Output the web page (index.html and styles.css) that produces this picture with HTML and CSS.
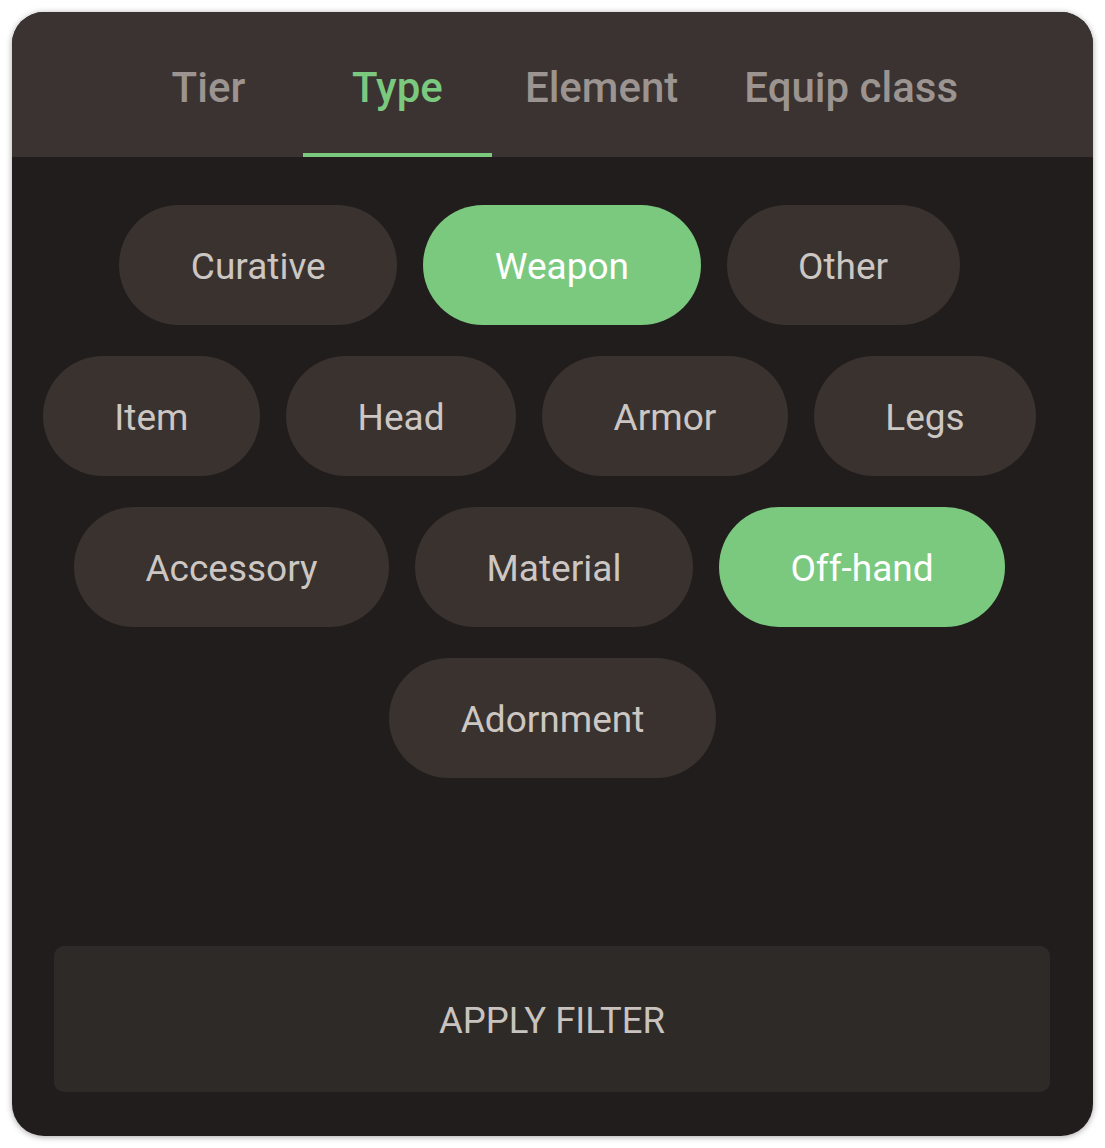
FILE: index.html
```html
<!DOCTYPE html>
<html>
<head>
<meta charset="utf-8">
<link rel="stylesheet" href="styles.css">
</head>
<body>
<div class="card">
  <nav class="tabs">
    <div class="tab">Tier</div>
    <div class="tab active">Type</div>
    <div class="tab">Element</div>
    <div class="tab">Equip class</div>
  </nav>
  <div class="chips">
    <div class="chip">Curative</div>
    <div class="chip on">Weapon</div>
    <div class="chip">Other</div>
    <div class="chip">Item</div>
    <div class="chip">Head</div>
    <div class="chip">Armor</div>
    <div class="chip">Legs</div>
    <div class="chip">Accessory</div>
    <div class="chip">Material</div>
    <div class="chip on">Off-hand</div>
    <div class="chip">Adornment</div>
  </div>
  <button class="apply">APPLY FILTER</button>
</div>
</body>
</html>
```
FILE: styles.css
```css
html, body {
  margin: 0;
  background: #ffffff;
}
body {
  padding: 12px;
  font-family: Roboto, "Liberation Sans", sans-serif;
}
.card {
  width: 1081px;
  height: 1124px;
  border-radius: 32px;
  background: #211d1c;
  overflow: hidden;
  display: flex;
  flex-direction: column;
  box-shadow: 0 1px 6px rgba(0,0,0,0.35);
}
.tabs {
  height: 145px;
  background: #3a3331;
  display: flex;
  justify-content: center;
  flex-shrink: 0;
}
.tab {
  min-width: 189px;
  box-sizing: border-box;
  padding: 9px 33px 0;
  display: flex;
  align-items: center;
  justify-content: center;
  font-size: 42px;
  font-weight: 500;
  color: #9b9490;
  border-bottom: 4px solid transparent;
}
.tab.active {
  color: #7bc97f;
  border-bottom-color: #7bc97f;
}
.chips {
  display: flex;
  flex-wrap: wrap;
  justify-content: center;
  padding: 48px 24px 0;
}
.chip {
  height: 120px;
  border-radius: 60px;
  margin: 0 26px 31px 0;
  padding: 3px 71.5px 0;
  box-sizing: border-box;
  background: #39322f;
  color: #cdc7c3;
  font-size: 37px;
  display: flex;
  align-items: center;
  justify-content: center;
}
.chip:last-child {
  margin-right: 0;
}
.chip.on {
  background: #7bc97f;
  color: #ffffff;
}
.apply {
  margin: auto 43px 44px 42px;
  height: 146px;
  border: none;
  border-radius: 10px;
  background: #2e2a28;
  color: #c9c3bf;
  font-family: Roboto, "Liberation Sans", sans-serif;
  font-size: 36.5px;
  padding: 2px 0 0;
}
```
